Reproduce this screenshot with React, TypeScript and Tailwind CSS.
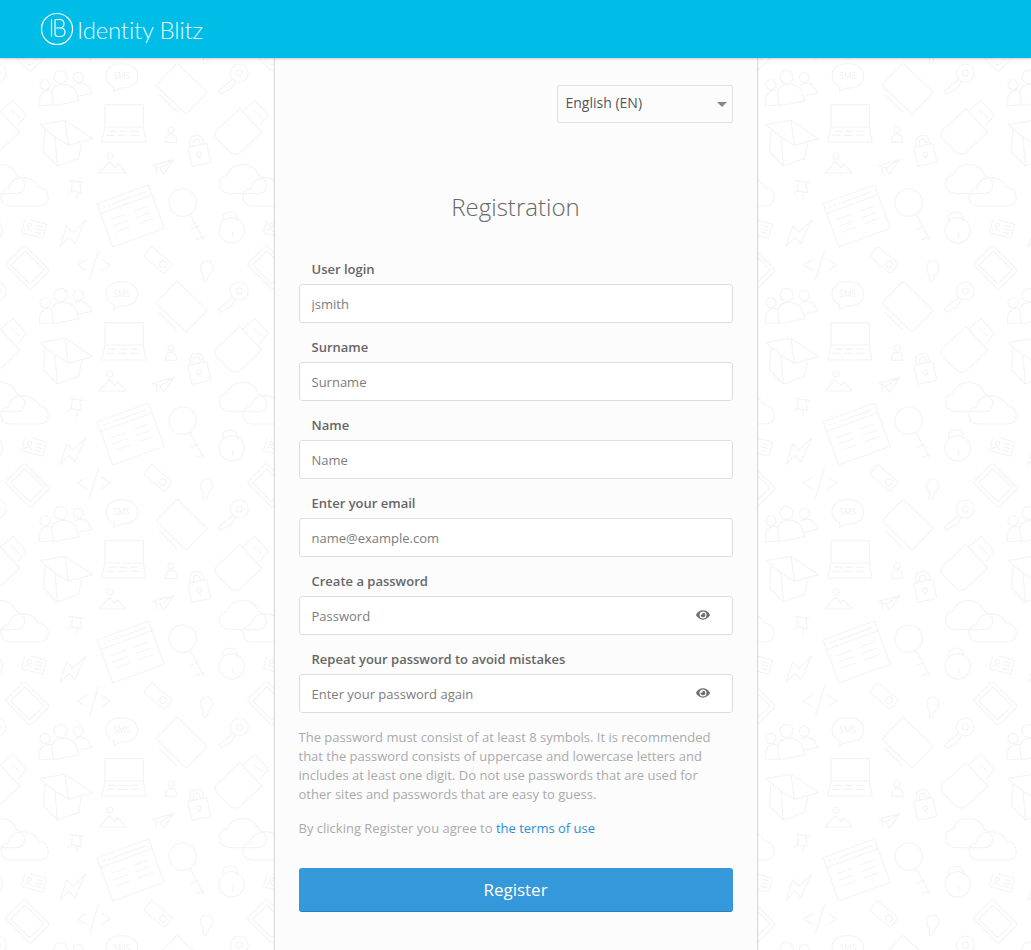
import React from "react";
import { FaEye } from "react-icons/fa";

const TILE_W = 726;
const TILE_H = 654;

function Icons() {
  return (
    <g fill="none" stroke="#f4f4f4" strokeWidth="3.6" strokeLinejoin="round" strokeLinecap="round">
      {/* id card */}
      <g transform="translate(102 25) rotate(15)">
        <rect x="-33" y="-22" width="66" height="44" rx="3" />
        <circle cx="-15" cy="-5" r="6" />
        <path d="M-25 12q10-10 20 0M6-10h18M6 0h18M6 10h18" />
      </g>
      {/* lightning */}
      <path d="M180 80L200 17L218 37L258 -1L235 47L225 72L207 52Z" />
      {/* browser window */}
      <g transform="translate(392 642) rotate(-20)">
        <rect x="-82" y="-69" width="164" height="138" />
        <path d="M-82 -38H82M-68 -53h6M-54 -53h6M-38 -53H66M-60 -10h46M-60 10h46M-60 30h46M14 -10h46M14 10h46M14 30h46" />
      </g>
      {/* key with teeth */}
      <circle cx="548" cy="602" r="41" />
      <path d="M570 637L612 715M573 682l22-10M588 712l24-8" />
      {/* lock */}
      <circle cx="695" cy="685" r="38" />
      <path d="M668 657V650Q668 630 690 630Q712 630 712 652V657M698 692v14" />
      {/* tablet */}
      <g transform="translate(82 142) rotate(45)">
        <rect x="-54" y="-41" width="108" height="82" rx="8" />
        <rect x="-40" y="-30" width="80" height="60" />
      </g>
      {/* code */}
      <path d="M260 118L232 135L260 152M296 90L268 180M305 118L332 135L305 152" />
      {/* device */}
      <g transform="translate(474 120) rotate(40)">
        <rect x="-41" y="-19" width="82" height="38" rx="6" />
        <circle cx="20" cy="0" r="10" />
      </g>
      {/* bulb */}
      <path d="M610 162C596 150 600 123 620 123C640 123 645 150 628 162L618 186L610 184Z" />
      {/* users */}
      <circle cx="182" cy="225" r="20" />
      <circle cx="135" cy="248" r="15" />
      <circle cx="235" cy="226" r="15" />
      <path d="M160 312L155 270Q160 248 185 248Q205 244 225 262L237 296ZM152 266Q130 262 120 282L118 312L162 308M225 248Q240 240 252 245Q265 250 276 274L236 282" />
      {/* sms */}
      <path d="M365 185C335 185 318 200 318 222C318 240 330 250 342 254L340 268L362 258C395 258 413 245 413 222C413 200 395 185 365 185Z" />
      <text x="365" y="232" textAnchor="middle" fontSize="25" fontFamily="Open Sans, sans-serif" fill="#f0f0f0" stroke="none">SMS</text>
      {/* key */}
      <circle cx="718" cy="213" r="27" />
      <circle cx="718" cy="213" r="9" />
      <path d="M698 232L655 268L662 277L672 272L678 266L690 262L700 250L705 240" />
      {/* notebook */}
      <g transform="translate(545 260) rotate(44)">
        <rect x="-63" y="-46" width="126" height="92" rx="5" />
      </g>
      <path d="M478 278L530 330" />
      {/* usb */}
      <path d="M720 320L785 390L720 452Q705 462 690 450L652 412Q638 397 652 382Z" />
      <path d="M730 325L765 295L805 340L780 370M760 325l10 10M775 338l8 8" />
      {/* box */}
      <path d="M120 368L195 355L278 410L205 430L165 405ZM135 385L130 450L172 492L235 470L245 425M165 405L172 492M195 355L205 430" />
      {/* laptop */}
      <path d="M315 375V308H430V375M315 375H430L438 420H305ZM325 388h22M358 388h22M392 388h22M320 400h24M355 400h24M390 400h26" />
      {/* person */}
      <circle cx="513" cy="384" r="9" />
      <path d="M497 421Q495 397 513 397Q532 397 530 421Z" />
      {/* padlock */}
      <g transform="translate(595 445) rotate(-12)">
        <rect x="-29" y="-15" width="58" height="58" rx="4" />
        <path d="M-20 -15V-25Q-20 -45 0 -45Q20 -45 20 -25V-15M-10 -15V-24Q-10 -34 0 -34Q10 -34 10 -24V-15" />
        <circle cx="0" cy="12" r="7" />
        <path d="M0 19v7" />
      </g>
      {/* picture */}
      <circle cx="330" cy="462" r="9" />
      <path d="M297 513L328 478L345 497L352 485L378 513Z" />
      {/* plane */}
      <path d="M458 490L522 472L490 517L480 498ZM480 498L522 472M470 515L468 494" />
      {/* pin */}
      <path d="M208 535L250 541M217 537L214 566L244 572L240 541M214 566L205 574M233 570L230 590" />
      {/* clouds */}
      <path d="M30 612Q3 610 3 585Q3 565 25 560Q35 525 72 527Q105 530 115 555Q145 560 145 585Q145 612 115 612Z" />
      <path d="M690 575Q658 572 658 545Q658 525 680 520Q695 485 730 487Q765 490 775 520Q800 530 800 550Q797 575 775 575Z" />
    </g>
  );
}

function Pattern() {
  const offsets = [
    [0, 0],
    [-TILE_W, 0],
    [0, -TILE_H],
    [-TILE_W, -TILE_H],
  ];
  return (
    <svg className="absolute inset-0 h-full w-full blur-[0.4px]" aria-hidden="true">
      <defs>
        <pattern id="doodles" patternUnits="userSpaceOnUse" width="242" height="218" patternTransform="translate(0 220)">
          <g transform="scale(0.33333)">
            {offsets.map(([x, y]) => (
              <g key={`${x}_${y}`} transform={`translate(${x} ${y})`}>
                <Icons />
              </g>
            ))}
          </g>
        </pattern>
      </defs>
      <rect width="100%" height="100%" fill="url(#doodles)" />
    </svg>
  );
}

function Logo() {
  return (
    <svg width="34" height="34" viewBox="0 0 34 34" fill="none" stroke="#fff" strokeWidth="1.2">
      <circle cx="17" cy="17" r="15.5" />
      <path d="M11.5 7.5V24.5" />
      <path d="M15 7.5V21.5Q15 24.5 18 24.5H20Q25 24.5 25 20Q25 16.3 20.5 16H16M20 16Q24 15.5 24 11.8Q24 7.5 19.5 7.5H15" />
    </svg>
  );
}

function Field({ label, placeholder, eye }: { label: string; placeholder: string; eye?: boolean }) {
  return (
    <div className="h-[78px]">
      <label className="block h-[26px] pl-[13px] pt-[2px] text-[13px] leading-[18px] font-semibold text-[#666]">{label}</label>
      <div className="relative">
        <input
          type="text"
          placeholder={placeholder}
          className="block w-full h-[39px] rounded-[3px] border border-[#dedede] bg-white pl-3 pr-10 text-[13px] text-[#666] placeholder:text-[#7c7c7c] outline-none"
        />
        {eye && <FaEye className="absolute right-[23px] top-[12px] text-[14px] text-[#6e6e6e]" />}
      </div>
    </div>
  );
}

export default function App() {
  return (
    <div className="relative h-[950px] overflow-hidden bg-white font-['Open_Sans',sans-serif]">
      <Pattern />
      <header className="relative z-10 flex h-[58px] items-center bg-[#00bde8] pl-[40px] shadow-[0_1px_2px_rgba(0,0,0,0.2)]">
        <Logo />
        <span className="ml-[3px] pt-[1px] font-['Lato',sans-serif] text-[24px] font-light tracking-[-0.2px] text-[#e4f8fd]">Identity Blitz</span>
      </header>
      <main className="relative flex justify-center">
        <div className="h-[892px] w-[484px] border-x border-[#dcdcdc] bg-[#fcfcfc] px-[24px] pt-[27px] shadow-[0_0_2px_rgba(0,0,0,0.08)]">
          <div className="flex justify-end">
            <div className="flex h-[38px] w-[176px] items-center justify-between rounded-[2px] border border-[#e0e0e0] pl-2 pr-[5px] pb-[2px] text-sm text-[#555]">
              <span>English (EN)</span>
              <span className="mt-[2px] h-0 w-0 border-x-[5px] border-t-[5px] border-x-transparent border-t-[#888]" />
            </div>
          </div>
          <h1 className="mt-[64px] text-center text-[24px] leading-[40px] font-light text-[#666]">Registration</h1>
          <div className="mt-[31px]">
            <Field label="User login" placeholder="jsmith" />
            <Field label="Surname" placeholder="Surname" />
            <Field label="Name" placeholder="Name" />
            <Field label="Enter your email" placeholder="name@example.com" />
            <Field label="Create a password" placeholder="Password" eye />
            <Field label="Repeat your password to avoid mistakes" placeholder="Enter your password again" eye />
          </div>
          <p className="mt-[2px] text-[13px] leading-[19px] text-[#aaa]">
            The password must consist of at least 8 symbols. It is recommended that the password consists of uppercase and lowercase letters and includes at least one digit. Do not use passwords that are used for other sites and passwords that are easy to guess.
          </p>
          <p className="mt-[15px] text-[13px] leading-[19px] text-[#aaa]">
            By clicking Register you agree to <a className="text-[#2b8fd8]">the terms of use</a>
          </p>
          <button className="mt-[30px] block h-[44px] w-full rounded-[3px] border-b border-[#2a80b9] bg-[#3498db] text-[17px] font-medium text-white">
            Register
          </button>
        </div>
      </main>
    </div>
  );
}
